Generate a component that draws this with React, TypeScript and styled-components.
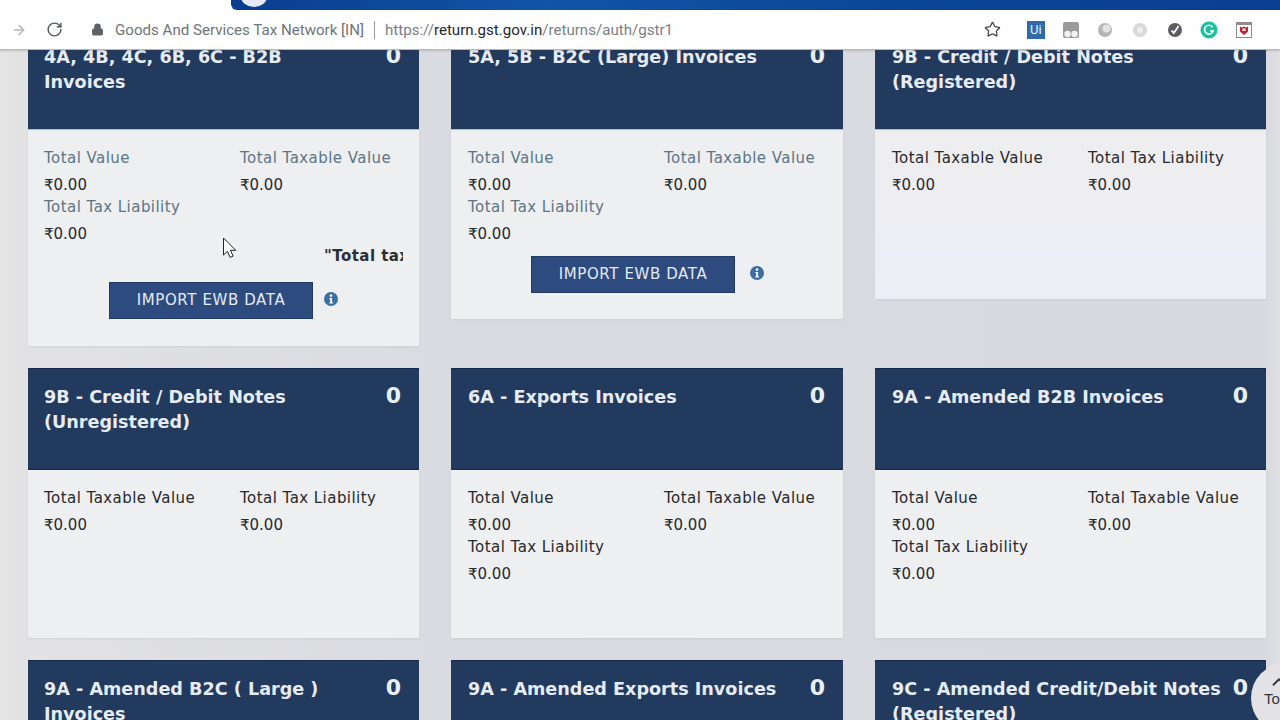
import React from "react";
import styled, { createGlobalStyle } from "styled-components";
import { ArrowRight, ChevronUp, Lock, RotateCw, Star } from "lucide-react";

const GlobalStyle = createGlobalStyle`
  html, body {
    margin: 0;
    padding: 0;
    height: 100%;
    overflow: hidden;
    background: #dadbdf;
  }
  * { box-sizing: border-box; }
`;

const Screen = styled.div`
  position: relative;
  width: 1280px;
  height: 720px;
  display: flex;
  flex-direction: column;
  overflow: hidden;
  font-family: "DejaVu Sans", Verdana, sans-serif;
  background: linear-gradient(90deg, #e4e4e5 0, #e2e2e4 20px, #dadbe1 430px, #d9dadf 1266px, #e0e0e3 1280px);
`;

const TopStrip = styled.div`
  height: 10px;
  flex: none;
  background: #fff;
  padding-left: 231px;
`;

const Banner = styled.div`
  position: relative;
  height: 10px;
  overflow: hidden;
  border-bottom-left-radius: 6px;
  background: linear-gradient(90deg, #0a3d8f, #1254a6 30%, #0b4596 65%, #0a3f91);
  &::before {
    content: "";
    position: absolute;
    left: 10px;
    top: -13px;
    width: 26px;
    height: 20px;
    border-radius: 50%;
    background: #e6e8f6;
  }
`;

const Toolbar = styled.div`
  position: relative;
  z-index: 2;
  flex: none;
  height: 40px;
  display: flex;
  align-items: center;
  background: #fefefe;
  border-bottom: 1px solid #c9b4b4;
  box-shadow: 0 1px 2px rgba(60, 40, 40, 0.2);
  font-family: Roboto, "Noto Sans", sans-serif;
  font-size: 15.1px;
`;

const NavSlot = styled.div<{ $w: number }>`
  width: ${(p) => p.$w}px;
  flex: none;
  display: flex;
  justify-content: center;
`;

const SiteName = styled.span`
  color: #70757a;
  width: 250px;
  margin-left: -9px;
  white-space: nowrap;
`;

const Divider = styled.span`
  width: 1px;
  height: 18px;
  background: #9a9ea3;
  margin: 0 10px 0 9px;
`;

const Url = styled.span`
  color: #7b8085;
  white-space: nowrap;
  b {
    font-weight: 400;
    color: #25282c;
  }
`;

const ToolIcons = styled.div`
  margin-left: auto;
  display: flex;
  align-items: center;
  gap: 14.7px;
  padding-right: 26px;
`;

const UiBadge = styled.span`
  width: 18px;
  height: 18px;
  margin-left: 11.6px;
  margin-right: 1px;
  display: flex;
  align-items: center;
  justify-content: center;
  background: #2f6ba8;
  color: #e6f0fa;
  font-size: 13px;
  line-height: 1;
`;

const ExtIcon = styled.svg`
  width: 20px;
  height: 20px;
  flex: none;
`;

const Page = styled.div`
  flex: 1;
  min-height: 0;
  overflow: hidden;
`;

const CardGrid = styled.div`
  display: grid;
  grid-template-columns: 391px 392px 391px;
  column-gap: 32px;
  row-gap: 22px;
  align-items: start;
  margin-top: -22px;
  padding-left: 28px;
`;

const Card = styled.section``;

const CardHead = styled.header<{ $lit?: boolean; $inset: number }>`
  height: 102px;
  display: flex;
  justify-content: space-between;
  padding: 16px 18px 0 ${(p) => p.$inset}px;
  background: #213a5e;
  border-top: 1px solid #16294c;
  border-bottom: 1px solid ${(p) => (p.$lit ? "#a9bcd8" : "#16294c")};
  color: #e6ebf4;
`;

const CardTitle = styled.h3`
  margin: 0;
  font-size: 17.6px;
  line-height: 25px;
  font-weight: 700;
  white-space: nowrap;
`;

const CardCount = styled.span`
  font-size: 22px;
  line-height: 22px;
  font-weight: 700;
  color: #eaeff6;
`;

const CardBody = styled.div<{ $tint?: boolean; $inset: number }>`
  min-height: ${(p) => (p.$tint ? 169 : 168)}px;
  padding: 17px 16px 26px ${(p) => p.$inset}px;
  background: ${(p) => (p.$tint ? "linear-gradient(#eeeeef, #ecedf6)" : "#eeeff1")};
  box-shadow: 0 1px 2px rgba(120, 120, 130, 0.12);
`;

const Fields = styled.div`
  display: grid;
  grid-template-columns: 196px 1fr;
`;

const Field = styled.div``;

const FieldLabel = styled.div<{ $muted?: boolean }>`
  font-size: 15px;
  letter-spacing: 0.45px;
  line-height: 22px;
  margin-bottom: 5px;
  white-space: nowrap;
  color: ${(p) => (p.$muted ? "#5b7687" : "#26292d")};
`;

const FieldValue = styled.div`
  font-size: 15px;
  line-height: 22px;
  color: #26292d;
`;

const Marquee = styled.div`
  margin: 1px 0 0 auto;
  width: 79px;
  height: 21px;
  overflow: hidden;
  white-space: nowrap;
  font-size: 15px;
  letter-spacing: 0.45px;
  line-height: 21px;
  font-weight: 700;
  color: #2a2f36;
`;

const ImportRow = styled.div<{ $top: number; $gap: number; $bottom: number }>`
  display: flex;
  align-items: center;
  justify-content: center;
  gap: ${(p) => p.$gap}px;
  margin-top: ${(p) => p.$top}px;
  margin-bottom: ${(p) => p.$bottom}px;
`;

const ImportButton = styled.button`
  width: 204px;
  height: 37px;
  padding: 0;
  background: #2e4b80;
  border: 1px solid #223a66;
  color: #e3e9f3;
  font-family: inherit;
  font-size: 15px;
  letter-spacing: 0.6px;
`;

const InfoIcon = styled.svg`
  width: 14px;
  height: 14px;
  margin-top: -3px;
  flex: none;
`;

const Cursor = styled.svg`
  position: absolute;
  left: 222px;
  top: 237px;
  width: 15px;
  height: 23px;
`;

const TopButton = styled.div`
  position: absolute;
  left: 1251px;
  top: 663px;
  width: 70px;
  height: 70px;
  border-radius: 50%;
  background: #e3e3e6;
  color: #33373c;
  font-family: "Liberation Sans", Arial, sans-serif;
  font-size: 15px;
  padding: 8px 0 0 13px;
  line-height: 16px;
  svg { display: block; margin-left: 4px; margin-bottom: -2px; }
`;

type CardData = {
  title: React.ReactNode;
  kind: "amount3" | "amount2";
  muted?: boolean;
  tint?: boolean;
  marquee?: boolean;
  importTop?: number;
  importGap?: number;
  importBottom?: number;
};

const cards: CardData[] = [
  { title: <>4A, 4B, 4C, 6B, 6C - B2B<br />Invoices</>, kind: "amount3", muted: true, marquee: true, importTop: 14.5, importGap: 11, importBottom: 1 },
  { title: "5A, 5B - B2C (Large) Invoices", kind: "amount3", muted: true, importTop: 10.5, importGap: 15 },
  { title: <>9B - Credit / Debit Notes<br />(Registered)</>, kind: "amount2", tint: true },
  { title: <>9B - Credit / Debit Notes<br />(Unregistered)</>, kind: "amount2" },
  { title: "6A - Exports Invoices", kind: "amount3" },
  { title: "9A - Amended B2B Invoices", kind: "amount3" },
  { title: <>9A - Amended B2C ( Large )<br />Invoices</>, kind: "amount3" },
  { title: "9A - Amended Exports Invoices", kind: "amount3" },
  { title: <>9C - Amended Credit/Debit Notes<br />(Registered)</>, kind: "amount2" },
];

const labels = {
  amount3: ["Total Value", "Total Taxable Value", "Total Tax Liability"],
  amount2: ["Total Taxable Value", "Total Tax Liability"],
};

const App = () => {
  return (
    <Screen>
      <GlobalStyle />
      <TopStrip>
        <Banner />
      </TopStrip>
      <Toolbar>
        <NavSlot $w={38}>
          <ArrowRight size={16} color="#b4b6b9" />
        </NavSlot>
        <NavSlot $w={32}>
          <RotateCw size={17} color="#55585c" strokeWidth={2} />
        </NavSlot>
        <NavSlot $w={54}>
          <Lock size={13} color="#5f6368" fill="#5f6368" />
        </NavSlot>
        <SiteName>Goods And Services Tax Network [IN]</SiteName>
        <Divider />
        <Url>
          https://<b>return.gst.gov.in</b>/returns/auth/gstr1
        </Url>
        <ToolIcons>
          <Star size={17} color="#44474b" strokeWidth={1.8} />
          <UiBadge>Ui</UiBadge>
          <ExtIcon viewBox="0 0 20 20">
            <rect x="2" y="2" width="16" height="16" rx="2" fill="#9a9a9d" />
            <circle cx="6.5" cy="14" r="3.2" fill="#f2f2f2" />
            <circle cx="13.5" cy="14" r="3.2" fill="#f2f2f2" />
          </ExtIcon>
          <ExtIcon viewBox="0 0 20 20">
            <circle cx="10" cy="10" r="7" fill="#b5b5b5" />
            <circle cx="11.5" cy="8.5" r="4" fill="#e4e4e4" />
          </ExtIcon>
          <ExtIcon viewBox="0 0 20 20">
            <circle cx="10" cy="10" r="7" fill="#d8d8d8" />
            <circle cx="10" cy="10" r="3" fill="#efefef" />
          </ExtIcon>
          <ExtIcon viewBox="0 0 20 20">
            <circle cx="10" cy="10" r="7" fill="#5a5c60" />
            <path d="M6.5 10.5l2.3 2.6 4.8-7" stroke="#fff" strokeWidth="1.8" fill="none" />
          </ExtIcon>
          <ExtIcon viewBox="0 0 20 20">
            <circle cx="10" cy="10" r="8.5" fill="#15c39a" />
            <path d="M13.6 7.2a4.4 4.4 0 1 0 .6 3.6h-3" stroke="#fff" strokeWidth="1.7" fill="none" />
          </ExtIcon>
          <ExtIcon viewBox="0 0 20 20">
            <rect x="2.5" y="2.5" width="15" height="15" fill="#fff" stroke="#8d8d8d" />
            <rect x="2.5" y="2.5" width="15" height="2.5" fill="#8d8d8d" />
            <path d="M6 6.5l2 1 2-1 2 1 2-1v5l-4 3.5-4-3.5z" fill="#c8202f" />
            <rect x="8.5" y="8.5" width="3" height="2.5" fill="#fff" />
          </ExtIcon>
        </ToolIcons>
      </Toolbar>
      <Page>
        <CardGrid>
          {cards.map((card, i) => {
            const inset = i % 3 === 0 ? 16 : 17;
            return (
              <Card key={i}>
                <CardHead $lit={i < 3} $inset={inset}>
                  <CardTitle>{card.title}</CardTitle>
                  <CardCount>0</CardCount>
                </CardHead>
                <CardBody $tint={card.tint} $inset={inset}>
                  <Fields>
                    {labels[card.kind].map((label) => (
                      <Field key={label}>
                        <FieldLabel $muted={card.muted}>{label}</FieldLabel>
                        <FieldValue>₹0.00</FieldValue>
                      </Field>
                    ))}
                  </Fields>
                  {card.marquee && <Marquee>"Total tax liability"</Marquee>}
                  {card.importTop !== undefined && (
                    <ImportRow $top={card.importTop} $gap={card.importGap ?? 11} $bottom={card.importBottom ?? 0}>
                      <ImportButton>IMPORT EWB DATA</ImportButton>
                      <InfoIcon viewBox="0 0 14 14">
                        <circle cx="7" cy="7" r="7" fill="#3a6ea5" />
                        <circle cx="7" cy="3.6" r="1.3" fill="#fff" />
                        <path d="M5.3 6h2.8v4.4h1V11.6H5.2v-1.2h1V7.1h-.9z" fill="#fff" />
                      </InfoIcon>
                    </ImportRow>
                  )}
                </CardBody>
              </Card>
            );
          })}
        </CardGrid>
      </Page>
      <Cursor viewBox="0 0 15 23">
        <path d="M1.5 1v17l4-3.6 2.6 6 3-1.3-2.6-5.8h5.2z" fill="#fff" stroke="#222" strokeWidth="1" />
      </Cursor>
      <TopButton>
        <ChevronUp size={22} />
        Top
      </TopButton>
    </Screen>
  );
};

export default App;
